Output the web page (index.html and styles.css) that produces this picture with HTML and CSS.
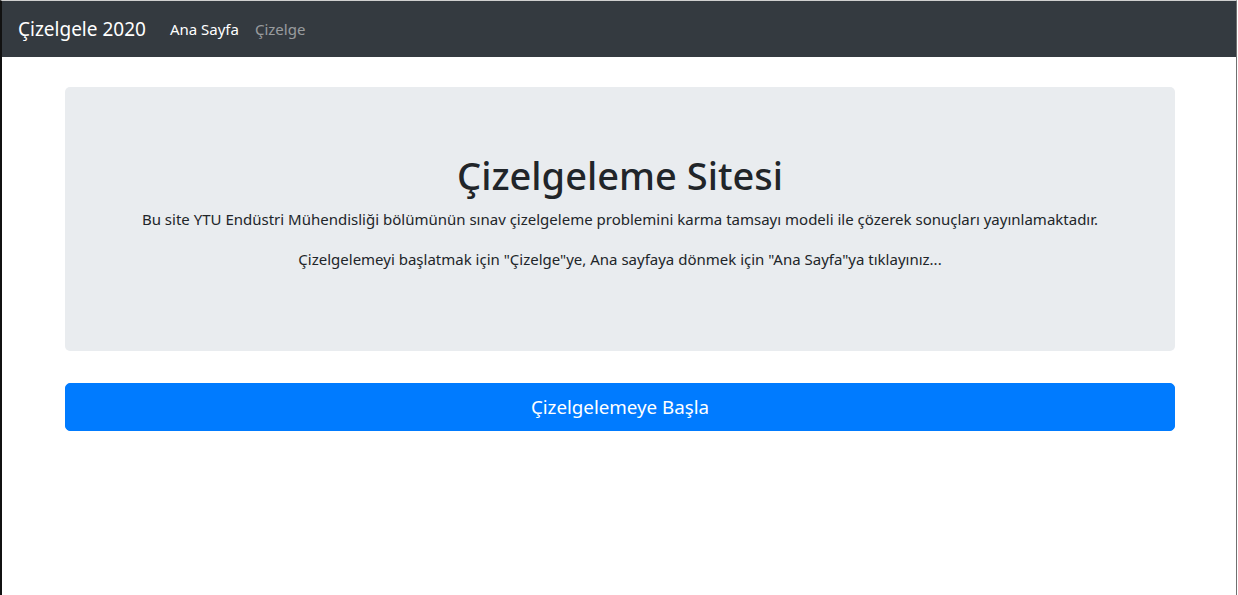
FILE: index.html
```html
<!DOCTYPE html>
<html lang="tr">
<head>
<meta charset="utf-8">
<title>Çizelgele 2020</title>
<link rel="stylesheet" href="styles.css">
</head>
<body>
<div class="frame">
  <nav class="navbar">
    <a class="brand" href="#">Çizelgele 2020</a>
    <ul class="nav">
      <li><a class="nav-link active" href="#">Ana Sayfa</a></li>
      <li><a class="nav-link" href="#">Çizelge</a></li>
    </ul>
  </nav>
  <main class="container">
    <section class="jumbotron">
      <h1 class="title">Çizelgeleme Sitesi</h1>
      <p class="lead">Bu site YTU Endüstri Mühendisliği bölümünün sınav çizelgeleme problemini karma tamsayı modeli ile çözerek sonuçları yayınlamaktadır.</p>
      <p class="lead">Çizelgelemeyi başlatmak için "Çizelge"ye, Ana sayfaya dönmek için "Ana Sayfa"ya tıklayınız...</p>
    </section>
    <a class="btn" href="#">Çizelgelemeye Başla</a>
  </main>
</div>
</body>
</html>
```
FILE: styles.css
```css
* { box-sizing: border-box; }
html, body { margin: 0; padding: 0; background: #fff; }
body {
  font-family: "Noto Sans", "Open Sans", sans-serif;
  font-size: 15px;
  line-height: 24px;
  color: #212529;
}
.frame {
  border-top: 1px solid #cfcfcf;
  border-left: 2px solid #111;
  border-right: 1px solid #707070;
  width: 1237px;
  min-height: 595px;
}
.navbar {
  background: #343a40;
  height: 56px;
  padding: 8px 16px;
  display: flex;
  align-items: center;
}
.brand {
  color: #fff;
  font-size: 19px;
  line-height: 30px;
  text-decoration: none;
  margin-right: 16px;
}
.nav { list-style: none; margin: 0; padding: 0; display: flex; }
.nav-link {
  display: block;
  padding: 8px 8px;
  color: rgba(255,255,255,.5);
  text-decoration: none;
}
.nav-link.active { color: #fff; }
.container {
  width: 1140px;
  margin: 0 auto;
  padding: 30px 14px 0 16px;
}
.jumbotron {
  background: #e9ecef;
  border-radius: 5px;
  padding: 64px 32px;
  margin-bottom: 32px;
  text-align: center;
}
.title {
  font-size: 38px;
  font-weight: 500;
  line-height: 48px;
  margin: 0 0 8px;
}
.lead { margin: 0 0 16px; }
.btn {
  display: block;
  background: #007bff;
  border: 1px solid #007bff;
  color: #fff;
  text-align: center;
  text-decoration: none;
  font-size: 18.75px;
  line-height: 30px;
  padding: 8px 16px;
  border-radius: 5px;
}
```
